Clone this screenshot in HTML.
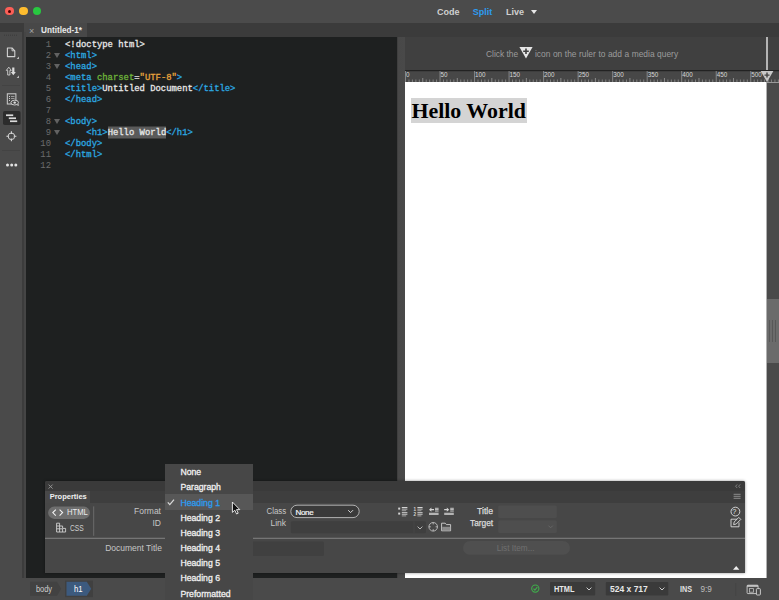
<!DOCTYPE html>
<html>
<head>
<meta charset="utf-8">
<title>Untitled-1</title>
<style>
*{box-sizing:border-box;margin:0;padding:0}
html,body{width:779px;height:600px;overflow:hidden;background:#4a4a4a}
body{position:relative;font-family:"Liberation Sans","DejaVu Sans",sans-serif;font-size:9px;color:#d6d6d6}
.abs{position:absolute}
#titlebar{left:0;top:0;width:779px;height:23px;background:#4b4b4b}
.tb{position:absolute;top:6px;font-size:9px;font-weight:bold;color:#d0d0d0;line-height:12px}
.tl{position:absolute;top:6.6px;width:8.6px;height:8.6px;border-radius:50%}
#tabbar{left:0;top:23px;width:779px;height:14px;background:#3b3b3b}
#tab{left:24px;top:23px;width:63px;height:14px;background:#484848}
#lefttool{left:0;top:32px;width:22px;height:546px;background:#4a4a4a}
#leftsep{left:22px;top:32px;width:4px;height:546px;background:linear-gradient(90deg,#3c3c3c 0,#3c3c3c 50%,#454545 50%,#454545 100%)}
#code{left:26px;top:37px;width:371px;height:541.8px;background:#1e2020}
#splitter{left:396.6px;top:37px;width:8.4px;height:541.4px;background:linear-gradient(90deg,#3a3a3a 0,#484848 18%,#494949 100%)}
#mq{left:405px;top:37px;width:374px;height:33px;background:#404040}
#ruler{left:405px;top:70px;width:374px;height:12.3px;background:#474747}
#page{left:405px;top:82.2px;width:361.6px;height:496.9px;background:#fff}
#rscroll{left:766.4px;top:82px;width:12.6px;height:496.4px;background:#4a4a4a;border-left:1.2px solid #b0b0b0}
#status{left:0;top:578px;width:779px;height:22px;background:#4a4a4a}
.sb{position:absolute;top:5.8px;font-size:8.6px;line-height:11px;white-space:pre}
#props{left:44.7px;top:481.3px;width:700.2px;height:91.3px;background:#474747;border-radius:2px 2px 0 0;box-shadow:0 0 3px rgba(0,0,0,.45)}
.pl{position:absolute;font-size:8.5px;line-height:11px;color:#c6c6c6;white-space:pre}
#dd{left:165.2px;top:463.8px;width:88px;height:136.2px;background:#474747;overflow:hidden}
.di{position:absolute;left:15.2px;font-size:8.7px;line-height:12px;font-weight:normal;-webkit-text-stroke:0.3px currentColor;white-space:pre}
.ln{position:absolute;margin-top:-0.2px;left:0;width:25px;text-align:right;color:#6c6c6c}
.cl{position:absolute;margin-top:-0.2px;left:39px;white-space:pre;-webkit-text-stroke:0.3px currentColor}
#code{font-family:"Liberation Mono","DejaVu Sans Mono",monospace;font-size:8.9px;line-height:11px;color:#e6e6e6}
.t{color:#2ca8e0}.a{color:#6db33a}.s{color:#e8a33d}
.fold{position:absolute;margin-top:-0.2px;left:27.6px;width:0;height:0;border-left:3.2px solid transparent;border-right:3.2px solid transparent;border-top:5.5px solid #626262}
.sel{background:#5a5a5a;box-shadow:0 -1.5px 0 #5a5a5a, 0 0.5px 0 #5a5a5a}
</style>
</head>
<body>
<div id="titlebar" class="abs">
  <div class="tl" style="left:5.4px;background:#fc5f57"><i style="position:absolute;left:3px;top:3px;width:3px;height:3px;border-radius:50%;background:#4d0000"></i></div>
  <div class="tl" style="left:19.1px;background:#fdbc2e"></div>
  <div class="tl" style="left:32.8px;background:#28c840"></div>
  <div class="tb" style="left:437px">Code</div>
  <div class="tb" style="left:472.8px;color:#2d9cf0">Split</div>
  <div class="tb" style="left:506px">Live</div>
  <div class="abs" style="left:531px;top:10px;width:0;height:0;border-left:3.5px solid transparent;border-right:3.5px solid transparent;border-top:4px solid #e8e8e8"></div>
</div>
<div id="tabbar" class="abs"></div>
<div id="tab" class="abs"><span style="position:absolute;left:5px;top:1.6px;color:#a6a6a6;font-size:9px;line-height:12px">×</span><span style="position:absolute;left:17px;top:2.2px;color:#e8e8e8;font-size:8.2px;font-weight:bold;line-height:12px">Untitled-1*</span></div>
<div id="lefttool" class="abs"><svg class="abs" style="left:0;top:0" width="26" height="546" viewBox="0 0 26 546">
<!-- coords: y offset = page y - 32 -->
<line x1="4" y1="3.2" x2="18" y2="3.2" stroke="#3a3a3a" stroke-width="1" stroke-dasharray="1 1"/>
<path d="M7.4 16 H12 L14.8 18.8 V24.6 H7.4 Z" fill="none" stroke="#d2d2d2" stroke-width="1.1" stroke-linejoin="round"/>
<path d="M12 16 V18.8 H14.8" fill="none" stroke="#d2d2d2" stroke-width="0.9"/>
<path d="M19 24.6 V27 H16.6 Z" fill="#bdbdbd"/>
<path d="M8.8 35.2 L11.3 38.4 H9.9 V43 H7.7 V38.4 H6.3 Z" fill="none" stroke="#d2d2d2" stroke-width="0.9" stroke-linejoin="round"/>
<path d="M13.3 43.2 L10.8 40 H12.2 V35.4 H14.4 V40 H15.8 Z" fill="#dcdcdc"/>
<path d="M19 43.6 V46 H16.6 Z" fill="#bdbdbd"/>
<line x1="2" y1="53.5" x2="20" y2="53.5" stroke="#434343" stroke-width="1"/>
<rect x="7.3" y="61.8" width="8.6" height="10.2" fill="none" stroke="#cfcfcf" stroke-width="1"/>
<path d="M9 64.5 h1 M9 66.5 h1 M9 68.5 h1" stroke="#cfcfcf" stroke-width="1"/>
<path d="M11 64.5 h3.5 M11 66.5 h3.5" stroke="#9a9a9a" stroke-width="1"/>
<ellipse cx="14.7" cy="70.6" rx="3.8" ry="2.4" fill="#4a4a4a" stroke="#d4d4d4" stroke-width="0.9"/>
<circle cx="14.7" cy="70.6" r="1.2" fill="#dedede"/>
<circle cx="18.1" cy="73" r="0.9" fill="#b4b4b4"/>
<rect x="3" y="79" width="17.6" height="14" rx="1.8" fill="#2c2c2c"/>
<rect x="6" y="82.4" width="7.2" height="1.7" fill="#dadada"/>
<rect x="8.8" y="85.4" width="7.2" height="1.7" fill="#dadada"/>
<rect x="10" y="88.4" width="7.2" height="1.7" fill="#dadada"/>
<circle cx="11.4" cy="104.3" r="3.3" fill="none" stroke="#d0d0d0" stroke-width="1"/>
<path d="M11.4 99.3 V102 M11.4 106.6 V109.3 M6.4 104.3 H9.1 M13.7 104.3 H16.4" stroke="#d6d6d6" stroke-width="1.1"/>
<line x1="2" y1="118.5" x2="20" y2="118.5" stroke="#434343" stroke-width="1"/>
<circle cx="7.5" cy="133" r="1.5" fill="#e2e2e2"/><circle cx="11.7" cy="133" r="1.5" fill="#e2e2e2"/><circle cx="15.8" cy="133" r="1.5" fill="#e2e2e2"/>
</svg></div>
<div id="leftsep" class="abs"></div>
<div id="code" class="abs">
<div class="ln" style="top:3.00px">1</div>
<div class="cl" style="top:3.00px">&lt;!doctype html&gt;</div>
<div class="ln" style="top:14.04px">2</div>
<div class="fold" style="top:16.04px"></div>
<div class="cl" style="top:14.04px"><span class="t">&lt;html&gt;</span></div>
<div class="ln" style="top:25.08px">3</div>
<div class="fold" style="top:27.08px"></div>
<div class="cl" style="top:25.08px"><span class="t">&lt;head&gt;</span></div>
<div class="ln" style="top:36.12px">4</div>
<div class="cl" style="top:36.12px"><span class="t">&lt;meta</span> <span class="a">charset</span>=<span class="s">"UTF-8"</span><span class="t">&gt;</span></div>
<div class="ln" style="top:47.16px">5</div>
<div class="cl" style="top:47.16px"><span class="t">&lt;title&gt;</span>Untitled Document<span class="t">&lt;/title&gt;</span></div>
<div class="ln" style="top:58.20px">6</div>
<div class="cl" style="top:58.20px"><span class="t">&lt;/head&gt;</span></div>
<div class="ln" style="top:69.24px">7</div>
<div class="ln" style="top:80.28px">8</div>
<div class="fold" style="top:82.28px"></div>
<div class="cl" style="top:80.28px"><span class="t">&lt;body&gt;</span></div>
<div class="ln" style="top:91.32px">9</div>
<div class="fold" style="top:93.32px"></div>
<div class="cl" style="top:91.32px">    <span class="t">&lt;h1&gt;</span><span class="sel">Hello World</span><span class="t">&lt;/h1&gt;</span></div>
<div class="ln" style="top:102.36px">10</div>
<div class="cl" style="top:102.36px"><span class="t">&lt;/body&gt;</span></div>
<div class="ln" style="top:113.40px">11</div>
<div class="cl" style="top:113.40px"><span class="t">&lt;/html&gt;</span></div>
<div class="ln" style="top:124.44px">12</div>
</div>
<div id="splitter" class="abs"></div>
<div id="mq" class="abs">
<span style="position:absolute;left:81px;top:12px;font-size:8.4px;line-height:11px;color:#9c9c9c;white-space:pre">Click the</span>
<svg style="position:absolute;left:114.4px;top:9.2px" width="14" height="14" viewBox="0 0 14 14"><path d="M0.4 1 H13.6 L7 12.6 Z" fill="#e6e6e6"/><path d="M7 2.4 V8 M4.2 5.2 H9.8" stroke="#404040" stroke-width="1.6"/></svg>
<span style="position:absolute;left:130px;top:12px;font-size:8.4px;line-height:11px;color:#9c9c9c;white-space:pre;word-spacing:0.25px">icon on the ruler to add a media query</span>
<div class="abs" style="left:361.1px;top:0;width:1.8px;height:36px;background:#b4b4b4"></div>
</div>
<div id="ruler" class="abs"><svg class="abs" style="left:0;top:0" width="374" height="13" viewBox="0 0 374 13"><rect x="0" y="0" width="374" height="1.2" fill="#222"/><rect x="0.00" y="1" width="1" height="11.3" fill="#858585"/><text x="1.00" y="6.8" font-size="6.3" fill="#d6d6d6" font-family="Liberation Sans, sans-serif">0</text><rect x="3.45" y="9.5" width="1" height="2.8" fill="#808080"/><rect x="6.91" y="9.5" width="1" height="2.8" fill="#808080"/><rect x="10.36" y="9.5" width="1" height="2.8" fill="#808080"/><rect x="13.81" y="9.5" width="1" height="2.8" fill="#808080"/><rect x="17.26" y="8" width="1" height="4.3" fill="#8a8a8a"/><rect x="20.71" y="9.5" width="1" height="2.8" fill="#808080"/><rect x="24.17" y="9.5" width="1" height="2.8" fill="#808080"/><rect x="27.62" y="9.5" width="1" height="2.8" fill="#808080"/><rect x="31.07" y="9.5" width="1" height="2.8" fill="#808080"/><rect x="34.52" y="1" width="1" height="11.3" fill="#858585"/><text x="35.52" y="6.8" font-size="6.3" fill="#d6d6d6" font-family="Liberation Sans, sans-serif">50</text><rect x="37.98" y="9.5" width="1" height="2.8" fill="#808080"/><rect x="41.43" y="9.5" width="1" height="2.8" fill="#808080"/><rect x="44.88" y="9.5" width="1" height="2.8" fill="#808080"/><rect x="48.34" y="9.5" width="1" height="2.8" fill="#808080"/><rect x="51.79" y="8" width="1" height="4.3" fill="#8a8a8a"/><rect x="55.24" y="9.5" width="1" height="2.8" fill="#808080"/><rect x="58.69" y="9.5" width="1" height="2.8" fill="#808080"/><rect x="62.15" y="9.5" width="1" height="2.8" fill="#808080"/><rect x="65.60" y="9.5" width="1" height="2.8" fill="#808080"/><rect x="69.05" y="1" width="1" height="11.3" fill="#858585"/><text x="70.05" y="6.8" font-size="6.3" fill="#d6d6d6" font-family="Liberation Sans, sans-serif">100</text><rect x="72.50" y="9.5" width="1" height="2.8" fill="#808080"/><rect x="75.95" y="9.5" width="1" height="2.8" fill="#808080"/><rect x="79.41" y="9.5" width="1" height="2.8" fill="#808080"/><rect x="82.86" y="9.5" width="1" height="2.8" fill="#808080"/><rect x="86.31" y="8" width="1" height="4.3" fill="#8a8a8a"/><rect x="89.77" y="9.5" width="1" height="2.8" fill="#808080"/><rect x="93.22" y="9.5" width="1" height="2.8" fill="#808080"/><rect x="96.67" y="9.5" width="1" height="2.8" fill="#808080"/><rect x="100.12" y="9.5" width="1" height="2.8" fill="#808080"/><rect x="103.58" y="1" width="1" height="11.3" fill="#858585"/><text x="104.58" y="6.8" font-size="6.3" fill="#d6d6d6" font-family="Liberation Sans, sans-serif">150</text><rect x="107.03" y="9.5" width="1" height="2.8" fill="#808080"/><rect x="110.48" y="9.5" width="1" height="2.8" fill="#808080"/><rect x="113.93" y="9.5" width="1" height="2.8" fill="#808080"/><rect x="117.39" y="9.5" width="1" height="2.8" fill="#808080"/><rect x="120.84" y="8" width="1" height="4.3" fill="#8a8a8a"/><rect x="124.29" y="9.5" width="1" height="2.8" fill="#808080"/><rect x="127.74" y="9.5" width="1" height="2.8" fill="#808080"/><rect x="131.19" y="9.5" width="1" height="2.8" fill="#808080"/><rect x="134.65" y="9.5" width="1" height="2.8" fill="#808080"/><rect x="138.10" y="1" width="1" height="11.3" fill="#858585"/><text x="139.10" y="6.8" font-size="6.3" fill="#d6d6d6" font-family="Liberation Sans, sans-serif">200</text><rect x="141.55" y="9.5" width="1" height="2.8" fill="#808080"/><rect x="145.00" y="9.5" width="1" height="2.8" fill="#808080"/><rect x="148.46" y="9.5" width="1" height="2.8" fill="#808080"/><rect x="151.91" y="9.5" width="1" height="2.8" fill="#808080"/><rect x="155.36" y="8" width="1" height="4.3" fill="#8a8a8a"/><rect x="158.81" y="9.5" width="1" height="2.8" fill="#808080"/><rect x="162.27" y="9.5" width="1" height="2.8" fill="#808080"/><rect x="165.72" y="9.5" width="1" height="2.8" fill="#808080"/><rect x="169.17" y="9.5" width="1" height="2.8" fill="#808080"/><rect x="172.62" y="1" width="1" height="11.3" fill="#858585"/><text x="173.62" y="6.8" font-size="6.3" fill="#d6d6d6" font-family="Liberation Sans, sans-serif">250</text><rect x="176.08" y="9.5" width="1" height="2.8" fill="#808080"/><rect x="179.53" y="9.5" width="1" height="2.8" fill="#808080"/><rect x="182.98" y="9.5" width="1" height="2.8" fill="#808080"/><rect x="186.44" y="9.5" width="1" height="2.8" fill="#808080"/><rect x="189.89" y="8" width="1" height="4.3" fill="#8a8a8a"/><rect x="193.34" y="9.5" width="1" height="2.8" fill="#808080"/><rect x="196.79" y="9.5" width="1" height="2.8" fill="#808080"/><rect x="200.25" y="9.5" width="1" height="2.8" fill="#808080"/><rect x="203.70" y="9.5" width="1" height="2.8" fill="#808080"/><rect x="207.15" y="1" width="1" height="11.3" fill="#858585"/><text x="208.15" y="6.8" font-size="6.3" fill="#d6d6d6" font-family="Liberation Sans, sans-serif">300</text><rect x="210.60" y="9.5" width="1" height="2.8" fill="#808080"/><rect x="214.06" y="9.5" width="1" height="2.8" fill="#808080"/><rect x="217.51" y="9.5" width="1" height="2.8" fill="#808080"/><rect x="220.96" y="9.5" width="1" height="2.8" fill="#808080"/><rect x="224.41" y="8" width="1" height="4.3" fill="#8a8a8a"/><rect x="227.87" y="9.5" width="1" height="2.8" fill="#808080"/><rect x="231.32" y="9.5" width="1" height="2.8" fill="#808080"/><rect x="234.77" y="9.5" width="1" height="2.8" fill="#808080"/><rect x="238.22" y="9.5" width="1" height="2.8" fill="#808080"/><rect x="241.68" y="1" width="1" height="11.3" fill="#858585"/><text x="242.68" y="6.8" font-size="6.3" fill="#d6d6d6" font-family="Liberation Sans, sans-serif">350</text><rect x="245.13" y="9.5" width="1" height="2.8" fill="#808080"/><rect x="248.58" y="9.5" width="1" height="2.8" fill="#808080"/><rect x="252.03" y="9.5" width="1" height="2.8" fill="#808080"/><rect x="255.49" y="9.5" width="1" height="2.8" fill="#808080"/><rect x="258.94" y="8" width="1" height="4.3" fill="#8a8a8a"/><rect x="262.39" y="9.5" width="1" height="2.8" fill="#808080"/><rect x="265.84" y="9.5" width="1" height="2.8" fill="#808080"/><rect x="269.30" y="9.5" width="1" height="2.8" fill="#808080"/><rect x="272.75" y="9.5" width="1" height="2.8" fill="#808080"/><rect x="276.20" y="1" width="1" height="11.3" fill="#858585"/><text x="277.20" y="6.8" font-size="6.3" fill="#d6d6d6" font-family="Liberation Sans, sans-serif">400</text><rect x="279.65" y="9.5" width="1" height="2.8" fill="#808080"/><rect x="283.11" y="9.5" width="1" height="2.8" fill="#808080"/><rect x="286.56" y="9.5" width="1" height="2.8" fill="#808080"/><rect x="290.01" y="9.5" width="1" height="2.8" fill="#808080"/><rect x="293.46" y="8" width="1" height="4.3" fill="#8a8a8a"/><rect x="296.92" y="9.5" width="1" height="2.8" fill="#808080"/><rect x="300.37" y="9.5" width="1" height="2.8" fill="#808080"/><rect x="303.82" y="9.5" width="1" height="2.8" fill="#808080"/><rect x="307.27" y="9.5" width="1" height="2.8" fill="#808080"/><rect x="310.73" y="1" width="1" height="11.3" fill="#858585"/><text x="311.73" y="6.8" font-size="6.3" fill="#d6d6d6" font-family="Liberation Sans, sans-serif">450</text><rect x="314.18" y="9.5" width="1" height="2.8" fill="#808080"/><rect x="317.63" y="9.5" width="1" height="2.8" fill="#808080"/><rect x="321.08" y="9.5" width="1" height="2.8" fill="#808080"/><rect x="324.54" y="9.5" width="1" height="2.8" fill="#808080"/><rect x="327.99" y="8" width="1" height="4.3" fill="#8a8a8a"/><rect x="331.44" y="9.5" width="1" height="2.8" fill="#808080"/><rect x="334.89" y="9.5" width="1" height="2.8" fill="#808080"/><rect x="338.35" y="9.5" width="1" height="2.8" fill="#808080"/><rect x="341.80" y="9.5" width="1" height="2.8" fill="#808080"/><rect x="345.25" y="1" width="1" height="11.3" fill="#858585"/><text x="346.25" y="6.8" font-size="6.3" fill="#d6d6d6" font-family="Liberation Sans, sans-serif">500</text><rect x="348.70" y="9.5" width="1" height="2.8" fill="#808080"/><rect x="352.16" y="9.5" width="1" height="2.8" fill="#808080"/><rect x="355.61" y="9.5" width="1" height="2.8" fill="#808080"/><rect x="359.06" y="9.5" width="1" height="2.8" fill="#808080"/><rect x="362.51" y="8" width="1" height="4.3" fill="#8a8a8a"/><rect x="365.96" y="9.5" width="1" height="2.8" fill="#808080"/><rect x="369.42" y="9.5" width="1" height="2.8" fill="#808080"/><rect x="372.87" y="9.5" width="1" height="2.8" fill="#808080"/><path d="M355.6 0.9 H368.4 L362 12 Z" fill="#c8c8c8"/><path d="M362 2.6 V7.6 M359.5 5.1 H364.5" stroke="#444" stroke-width="1.4"/></svg></div>
<div id="page" class="abs"><div style="position:absolute;left:5.8px;top:15.8px;width:116px;height:25.4px;background:#d4d4d4"></div><div style="position:absolute;left:6.4px;top:16px;font-family:'Liberation Serif','DejaVu Serif',serif;font-weight:bold;font-size:21.9px;line-height:25px;color:#000;white-space:pre">Hello World</div></div>
<div id="rscroll" class="abs"><div class="abs" style="left:0;top:0;width:12px;height:1px;background:#9a9a9a"></div><div class="abs" style="left:0;top:217px;width:12px;height:64px;background:#6b6b6b"><i class="abs" style="left:2px;top:21px;width:1px;height:22px;background:#585858"></i><i class="abs" style="left:5px;top:21px;width:1px;height:22px;background:#585858"></i><i class="abs" style="left:7.8px;top:21px;width:1px;height:22px;background:#585858"></i></div></div>
<div id="props" class="abs">
<div class="abs" style="left:0;top:0;width:700px;height:9.4px;background:#3a3a3a;border-radius:2px 2px 0 0"></div>
<div class="abs" style="left:0;top:9.4px;width:700px;height:12.2px;background:#3e3e3e"></div>
<div class="abs" style="left:0;top:9.4px;width:45.3px;height:12.4px;background:#484848"></div>
<span class="abs" style="left:5px;top:10px;font-size:7.5px;line-height:11px;font-weight:bold;color:#f0f0f0">Properties</span>
<svg class="abs" style="left:0;top:0" width="700" height="91" viewBox="0 0 700 91">
<path d="M3.6 3.6 L7.6 7.6 M7.6 3.6 L3.6 7.6" stroke="#9a9a9a" stroke-width="0.9"/>
<path d="M692.2 3.4 L690.6 5.2 L692.2 7 M695.2 3.4 L693.6 5.2 L695.2 7" fill="none" stroke="#8e8e8e" stroke-width="0.8"/>
<path d="M688.6 13.4 h7 M688.6 15.4 h7 M688.6 17.4 h7" stroke="#7c7c7c" stroke-width="1.3"/>
<rect x="3.1" y="25.6" width="41.9" height="12.3" rx="6.15" fill="#6e6e6e"/>
<path d="M10.8 28.6 L7.8 31.6 L10.8 34.6 M14.6 28.6 L17.6 31.6 L14.6 34.6" fill="none" stroke="#f2f2f2" stroke-width="1.1"/>
<path d="M11.6 42.2 V51 H20.6 V47.4 H17.6 V45 H14.6 V42.2 Z M11.6 45 H14.6 V51 M11.6 47.8 H17.6 V51" fill="none" stroke="#d0d0d0" stroke-width="0.9"/>
<rect x="48.2" y="25.4" width="1" height="29.4" fill="#6c6c6c"/>
<rect x="0" y="56.7" width="700.2" height="1.3" fill="#757575"/>
<g transform="translate(0,0.8)"><!-- class select -->
<rect x="245.8" y="23.4" width="68.4" height="12.4" rx="6.2" fill="#3a3a3a" stroke="#bdbdbd" stroke-width="0.9"/>
<path d="M303.2 28.4 L305.6 30.8 L308 28.4" fill="none" stroke="#d8d8d8" stroke-width="1"/>
<!-- link input -->
<rect x="245.8" y="39.4" width="135.2" height="12" rx="1.5" fill="#3f3f3f"/>
<rect x="368.6" y="39.4" width="0.7" height="12" fill="#4a4a4a"/>
<path d="M372.6 44.8 L375 47.2 L377.4 44.8" fill="none" stroke="#c4c4c4" stroke-width="0.9"/>
<circle cx="388.2" cy="45" r="4.3" fill="none" stroke="#cdcdcd" stroke-width="0.8"/>
<path d="M388.2 40.7 V42.6 M388.2 47.4 V49.3 M383.9 45 H385.8 M390.6 45 H392.5" stroke="#cdcdcd" stroke-width="0.8"/>
<path d="M396.6 41.4 H400.2 L401.4 42.8 H405.6 V49 H396.6 Z" fill="none" stroke="#d2d2d2" stroke-width="0.9" stroke-linejoin="round"/>
<rect x="397.2" y="45" width="8" height="3.6" fill="#8c8c8c"/>
<!-- list icons -->
<g fill="#d4d4d4">
<rect x="353.2" y="25.8" width="2" height="2"/><rect x="353.2" y="30.8" width="2" height="2"/>
<rect x="356.8" y="25.2" width="5.6" height="1" /><rect x="356.8" y="26.8" width="5.6" height="1" fill="#bcbcbc"/><rect x="356.8" y="28.4" width="4.4" height="1" fill="#a0a0a0"/>
<rect x="356.8" y="30.4" width="5.6" height="1" /><rect x="356.8" y="32" width="5.6" height="1" fill="#bcbcbc"/><rect x="356.8" y="33.6" width="4.4" height="1" fill="#a0a0a0"/>
<text x="368.6" y="29.2" font-size="4.6" font-weight="bold" font-family="Liberation Sans, sans-serif">1</text><text x="368.6" y="34.6" font-size="4.6" font-weight="bold" font-family="Liberation Sans, sans-serif">2</text><rect x="372.4" y="25.2" width="5.2" height="1" /><rect x="372.4" y="26.8" width="5.2" height="1" fill="#bcbcbc"/><rect x="372.4" y="28.4" width="4" height="1" fill="#a0a0a0"/>
<rect x="372.4" y="30.4" width="5.2" height="1" /><rect x="372.4" y="32" width="5.2" height="1" fill="#bcbcbc"/><rect x="372.4" y="33.6" width="4" height="1" fill="#a0a0a0"/>
<rect x="390" y="26" width="3.6" height="0.9"/><rect x="390" y="27.4" width="3.6" height="0.9"/><rect x="390" y="28.8" width="3.6" height="0.9"/>
<rect x="384" y="30.9" width="9.6" height="2.3" fill="#b4b4b4"/>
<path d="M384 27.9 L386.4 25.8 V27.3 H389 V28.5 H386.4 V30 Z"/>
<rect x="405.2" y="26" width="3.6" height="0.9"/><rect x="405.2" y="27.4" width="3.6" height="0.9"/><rect x="405.2" y="28.8" width="3.6" height="0.9"/>
<rect x="399.2" y="30.9" width="9.6" height="2.3" fill="#b4b4b4"/>
<path d="M404.2 27.9 L401.8 25.8 V27.3 H399.2 V28.5 H401.8 V30 Z"/>
</g>
<!-- title/target -->
<rect x="453.2" y="23.6" width="58.6" height="12.6" rx="1.5" fill="#4e4e4e"/>
<rect x="453.2" y="38.4" width="58.6" height="12.8" rx="1.5" fill="#4e4e4e"/>
<path d="M503.4 43.8 L505.6 46 L507.8 43.8" fill="none" stroke="#666" stroke-width="1"/>
<rect x="418" y="59.2" width="107" height="13.8" rx="6.9" fill="#4f4f4f"/>
<!-- doc title input -->
<rect x="170" y="59.8" width="109" height="14.4" rx="1.5" fill="#404040"/>
<!-- help -->
<circle cx="690.4" cy="29.8" r="4.4" fill="none" stroke="#e0e0e0" stroke-width="0.9"/>
<path d="M686 37.4 H692 M686 37.4 V45 H694 V40.6" fill="none" stroke="#dcdcdc" stroke-width="0.9"/>
<path d="M688.6 42.8 L689.2 40.2 L693.8 35.6 L695.8 37.6 L691.2 42.2 Z" fill="none" stroke="#dcdcdc" stroke-width="0.9" stroke-linejoin="round"/>
</g><path d="M688 88.8 L691.2 85 L694.4 88.8 Z" fill="#f0f0f0"/>
</svg>
<span class="pl" style="right:583.9px;top:24.3px">Format</span>
<span class="pl" style="right:583.9px;top:36.9px">ID</span>
<span class="pl" style="right:583px;top:62.1px">Document Title</span>
<span class="pl" style="right:458.8px;top:25px;transform:scaleX(0.93);transform-origin:100% 0">Class</span>
<span class="pl" style="right:458.8px;top:37.1px">Link</span>
<span class="pl" style="right:251.8px;top:25px;color:#dcdcdc;font-size:8.7px;-webkit-text-stroke:0.25px #dcdcdc">Title</span>
<span class="pl" style="right:251.8px;top:37.1px;color:#dcdcdc;font-size:8.7px;-webkit-text-stroke:0.25px #dcdcdc;transform:scaleX(0.96);transform-origin:100% 0">Target</span>
<span class="pl" style="left:22.3px;top:26.1px;color:#ececec;font-size:8.8px;transform:scaleX(0.87);transform-origin:0 0">HTML</span>
<span class="pl" style="left:25.7px;top:41.9px;color:#cfcfcf;font-size:8.8px;transform:scaleX(0.76);transform-origin:0 0">CSS</span>
<span class="pl" style="left:250.8px;top:25.6px;color:#f6f6f6;font-size:8px;letter-spacing:-0.3px;-webkit-text-stroke:0.2px #f6f6f6">None</span>
<span class="pl" style="left:452px;top:61.4px;color:#6f6f6f;font-size:8.2px">List Item...</span>
<span class="abs" style="left:687.6px;top:26px;font-size:7.4px;line-height:9px;color:#e6e6e6">?</span>
</div>
<div id="status" class="abs">
<svg class="abs" style="left:0;top:0" width="779" height="22" viewBox="0 0 779 22">
<path d="M30 3.8 H57 L61.2 10.8 L57 17.8 H30 Z" fill="#424242"/>
<rect x="65" y="2.6" width="28" height="16.6" fill="#404040"/>
<path d="M66.5 3.8 H86.8 L91.2 10.8 L86.8 17.8 H66.5 Z" fill="#3c5a7e"/>
<circle cx="535.3" cy="10.6" r="3.6" fill="none" stroke="#3fae4b" stroke-width="1.1"/>
<path d="M533.5 10.7 L534.9 12.1 L537.3 9.2" fill="none" stroke="#3fae4b" stroke-width="1.1"/>
<rect x="550" y="4" width="45.2" height="13.4" rx="1" fill="#3a3a3a"/>
<rect x="605.8" y="4" width="62.5" height="13.4" rx="1" fill="#3a3a3a"/>
<path d="M586.6 9.6 L589 12 L591.4 9.6" fill="none" stroke="#cfcfcf" stroke-width="1"/>
<path d="M659.6 9.6 L662 12 L664.4 9.6" fill="none" stroke="#cfcfcf" stroke-width="1"/>
<rect x="747.1" y="7.2" width="11" height="8.4" rx="0.8" fill="none" stroke="#cdcdcd" stroke-width="0.9"/>
<rect x="747.1" y="7.2" width="11" height="1.6" fill="#cdcdcd"/>
<rect x="749.6" y="10.6" width="3.8" height="3.6" fill="none" stroke="#c0c0c0" stroke-width="0.8"/>
<rect x="756.4" y="10.6" width="4" height="6.4" rx="0.8" fill="#4a4a4a" stroke="#d6d6d6" stroke-width="0.9"/>
<rect x="735.4" y="5" width="0.8" height="13" fill="#434343"/>
</svg>
<span class="sb" style="left:36px;color:#cfcfcf;font-size:8.6px;transform:scaleX(0.86);transform-origin:0 0">body</span>
<span class="sb" style="left:73.6px;color:#fff;font-size:8.8px;transform:scaleX(0.88);transform-origin:0 0">h1</span>
<span class="sb" style="left:554px;color:#e8e8e8;font-weight:bold;font-size:8.6px;transform:scaleX(0.86);transform-origin:0 0">HTML</span>
<span class="sb" style="left:610px;color:#e8e8e8;font-weight:bold;font-size:8.5px">524 x 717</span>
<span class="sb" style="left:679.5px;color:#e0e0e0;font-weight:bold;font-size:8.6px;transform:scaleX(0.84);transform-origin:0 0">INS</span>
<span class="sb" style="left:700.5px;color:#bdbdbd;font-size:8.2px">9:9</span>
</div>
<div id="dd" class="abs">
<div class="abs" style="left:0;top:30.2px;width:88px;height:15.6px;background:#575757"></div>
<span class="di" style="top:2.40px;color:#f0f0f0">None</span>
<span class="di" style="top:17.58px;color:#f0f0f0">Paragraph</span>
<span class="di" style="top:32.76px;color:#2d9cf0">Heading 1</span>
<span class="di" style="top:47.94px;color:#f0f0f0">Heading 2</span>
<span class="di" style="top:63.12px;color:#f0f0f0">Heading 3</span>
<span class="di" style="top:78.30px;color:#f0f0f0">Heading 4</span>
<span class="di" style="top:93.48px;color:#f0f0f0">Heading 5</span>
<span class="di" style="top:108.66px;color:#f0f0f0">Heading 6</span>
<span class="di" style="top:123.84px;color:#f0f0f0">Preformatted</span>
<svg class="abs" style="left:0;top:0" width="88" height="136" viewBox="0 0 88 136"><path d="M2.8 38.4 L4.8 40.6 L9 35.6" fill="none" stroke="#d8d8d8" stroke-width="1.3"/><path d="M67.4 38 V48.4 L69.8 46.2 L71.6 50 L73.2 49.2 L71.5 45.6 H74.8 Z" fill="#111" stroke="#f4f4f4" stroke-width="0.9" stroke-linejoin="round"/></svg>
</div>
</body>
</html>
